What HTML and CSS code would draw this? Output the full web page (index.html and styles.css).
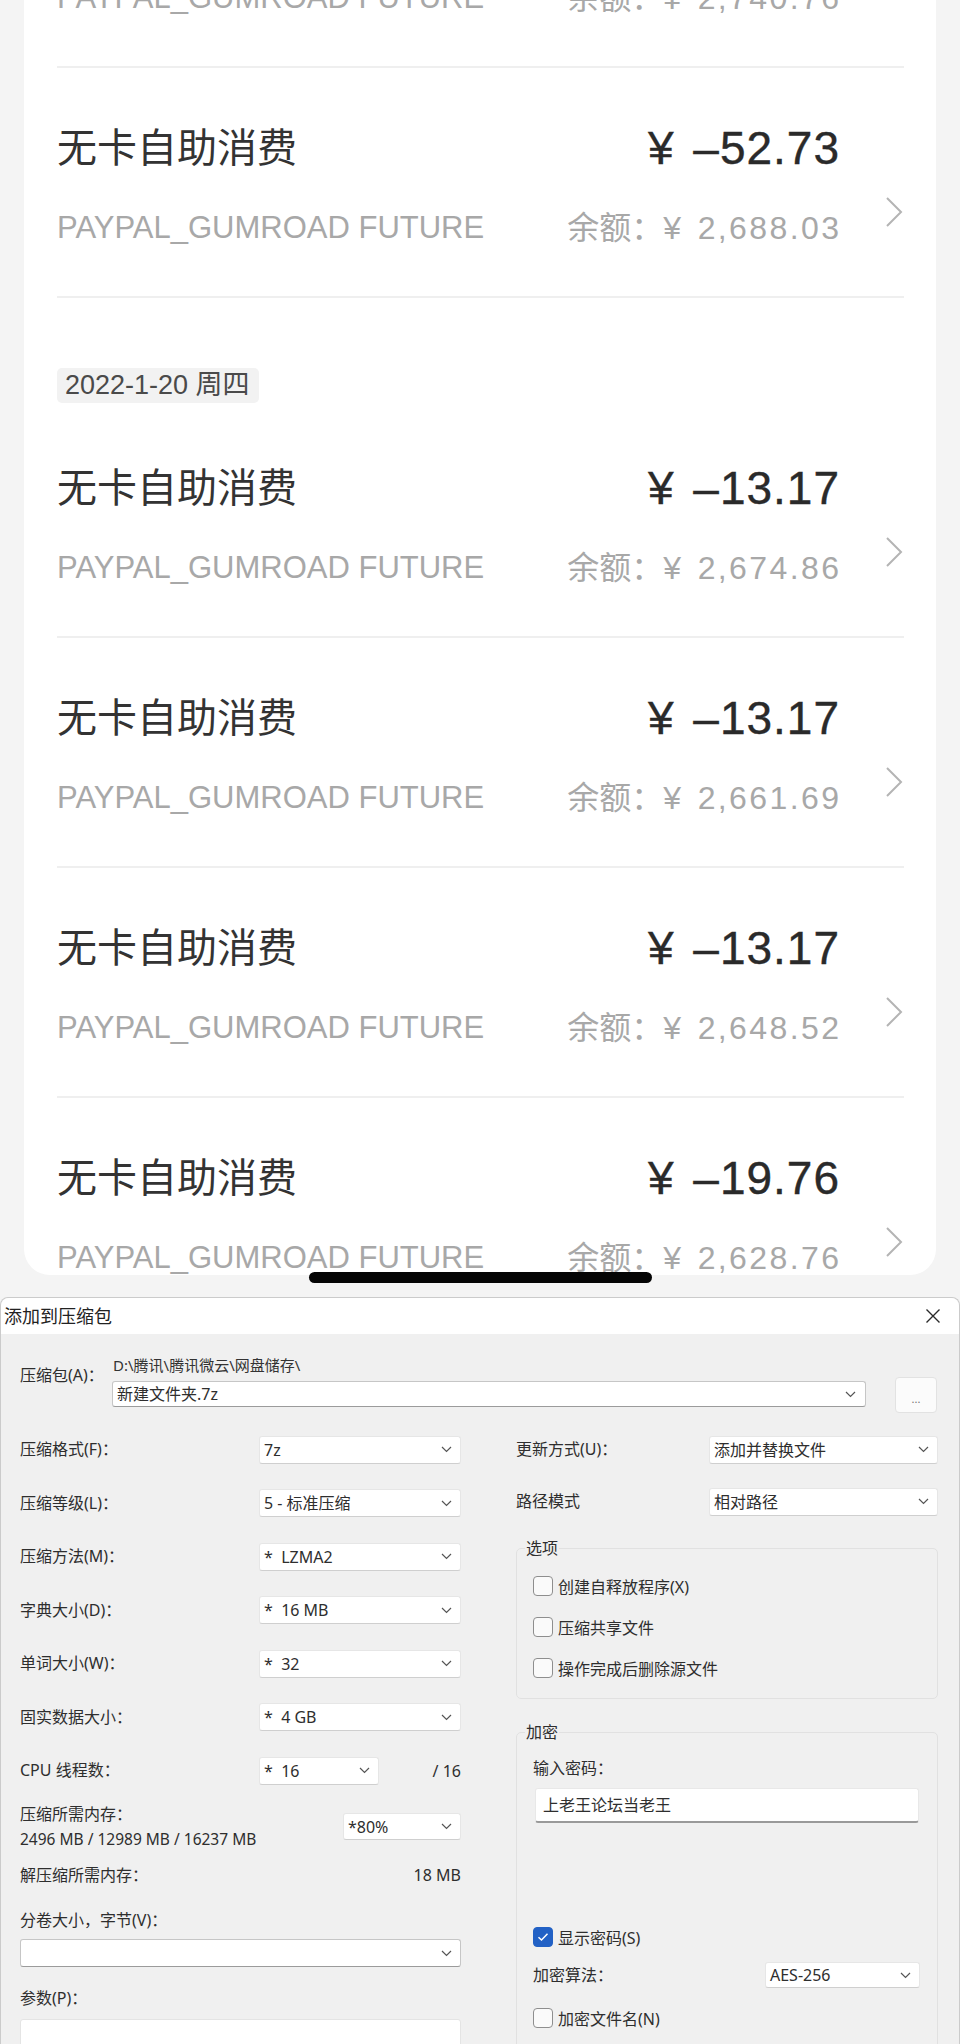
FILE: index.html
```html
<!DOCTYPE html>
<html lang="zh-CN">
<head>
<meta charset="utf-8">
<title>交易明细</title>
<link rel="stylesheet" href="styles.css">
</head>
<body>
<div class="phone">
  <div class="card">
    <div class="row first">
      <div class="row-main">
        <div class="line"><span class="title">无卡自助消费</span><span class="amount">¥ –20.03</span></div>
        <div class="line sub"><span class="merchant">PAYPAL_GUMROAD FUTURE</span><span class="balance">余额：<span class="num">¥ 2,740.76</span></span></div>
      </div>
      <div class="chev-col"><svg class="chev" width="18" height="32" viewBox="0 0 18 32"><path d="M2 2L16 16L2 30" fill="none" stroke="#b4b4b4" stroke-width="2"/></svg></div>
    </div>
    <div class="row">
      <div class="row-main">
        <div class="line"><span class="title">无卡自助消费</span><span class="amount">¥ –52.73</span></div>
        <div class="line sub"><span class="merchant">PAYPAL_GUMROAD FUTURE</span><span class="balance">余额：<span class="num">¥ 2,688.03</span></span></div>
      </div>
      <div class="chev-col"><svg class="chev" width="18" height="32" viewBox="0 0 18 32"><path d="M2 2L16 16L2 30" fill="none" stroke="#b4b4b4" stroke-width="2"/></svg></div>
    </div>
    <div class="date-group"><span class="date">2022-1-20 周四</span></div>
    <div class="row">
      <div class="row-main">
        <div class="line"><span class="title">无卡自助消费</span><span class="amount">¥ –13.17</span></div>
        <div class="line sub"><span class="merchant">PAYPAL_GUMROAD FUTURE</span><span class="balance">余额：<span class="num">¥ 2,674.86</span></span></div>
      </div>
      <div class="chev-col"><svg class="chev" width="18" height="32" viewBox="0 0 18 32"><path d="M2 2L16 16L2 30" fill="none" stroke="#b4b4b4" stroke-width="2"/></svg></div>
    </div>
    <div class="row">
      <div class="row-main">
        <div class="line"><span class="title">无卡自助消费</span><span class="amount">¥ –13.17</span></div>
        <div class="line sub"><span class="merchant">PAYPAL_GUMROAD FUTURE</span><span class="balance">余额：<span class="num">¥ 2,661.69</span></span></div>
      </div>
      <div class="chev-col"><svg class="chev" width="18" height="32" viewBox="0 0 18 32"><path d="M2 2L16 16L2 30" fill="none" stroke="#b4b4b4" stroke-width="2"/></svg></div>
    </div>
    <div class="row">
      <div class="row-main">
        <div class="line"><span class="title">无卡自助消费</span><span class="amount">¥ –13.17</span></div>
        <div class="line sub"><span class="merchant">PAYPAL_GUMROAD FUTURE</span><span class="balance">余额：<span class="num">¥ 2,648.52</span></span></div>
      </div>
      <div class="chev-col"><svg class="chev" width="18" height="32" viewBox="0 0 18 32"><path d="M2 2L16 16L2 30" fill="none" stroke="#b4b4b4" stroke-width="2"/></svg></div>
    </div>
    <div class="row">
      <div class="row-main">
        <div class="line"><span class="title">无卡自助消费</span><span class="amount">¥ –19.76</span></div>
        <div class="line sub"><span class="merchant">PAYPAL_GUMROAD FUTURE</span><span class="balance">余额：<span class="num">¥ 2,628.76</span></span></div>
      </div>
      <div class="chev-col"><svg class="chev" width="18" height="32" viewBox="0 0 18 32"><path d="M2 2L16 16L2 30" fill="none" stroke="#b4b4b4" stroke-width="2"/></svg></div>
    </div>
  </div>
  <div class="home-bar"></div>

  <div class="dialog">
    <div class="titlebar">
      <span class="dlg-title">添加到压缩包</span>
      <svg class="close" width="16" height="16" viewBox="0 0 16 16"><path d="M1.5 1.5L14.5 14.5M14.5 1.5L1.5 14.5" stroke="#2a2a2a" stroke-width="1.4" fill="none"/></svg>
    </div>
    <div class="dlg-body">
      <div class="archive">
        <span class="archive-lbl">压缩包(A)：</span>
        <div class="archive-main">
          <div class="path">D:\腾讯\腾讯微云\网盘储存\</div>
          <div class="select edit wide"><span>新建文件夹.7z</span><svg width="11" height="7" viewBox="0 0 11 7"><path d="M1 1L5.5 5.5L10 1" fill="none" stroke="#555" stroke-width="1.2"/></svg></div>
        </div>
        <div class="browse">...</div>
      </div>

      <div class="cols">
        <div class="col-left">
          <div class="frow"><span class="lbl">压缩格式(F)：</span><div class="select sel-l"><span>7z</span><svg width="11" height="7" viewBox="0 0 11 7"><path d="M1 1L5.5 5.5L10 1" fill="none" stroke="#555" stroke-width="1.2"/></svg></div></div>
          <div class="frow"><span class="lbl">压缩等级(L)：</span><div class="select sel-l"><span>5 - 标准压缩</span><svg width="11" height="7" viewBox="0 0 11 7"><path d="M1 1L5.5 5.5L10 1" fill="none" stroke="#555" stroke-width="1.2"/></svg></div></div>
          <div class="frow"><span class="lbl">压缩方法(M)：</span><div class="select sel-l"><span>*&nbsp;&nbsp;LZMA2</span><svg width="11" height="7" viewBox="0 0 11 7"><path d="M1 1L5.5 5.5L10 1" fill="none" stroke="#555" stroke-width="1.2"/></svg></div></div>
          <div class="frow"><span class="lbl">字典大小(D)：</span><div class="select sel-l"><span>*&nbsp;&nbsp;16 MB</span><svg width="11" height="7" viewBox="0 0 11 7"><path d="M1 1L5.5 5.5L10 1" fill="none" stroke="#555" stroke-width="1.2"/></svg></div></div>
          <div class="frow"><span class="lbl">单词大小(W)：</span><div class="select sel-l"><span>*&nbsp;&nbsp;32</span><svg width="11" height="7" viewBox="0 0 11 7"><path d="M1 1L5.5 5.5L10 1" fill="none" stroke="#555" stroke-width="1.2"/></svg></div></div>
          <div class="frow"><span class="lbl">固实数据大小：</span><div class="select sel-l"><span>*&nbsp;&nbsp;4 GB</span><svg width="11" height="7" viewBox="0 0 11 7"><path d="M1 1L5.5 5.5L10 1" fill="none" stroke="#555" stroke-width="1.2"/></svg></div></div>
          <div class="frow"><span class="lbl">CPU 线程数：</span><div class="select sel-cpu"><span>*&nbsp;&nbsp;16</span><svg width="11" height="7" viewBox="0 0 11 7"><path d="M1 1L5.5 5.5L10 1" fill="none" stroke="#555" stroke-width="1.2"/></svg></div><span class="frac">/ 16</span></div>
          <div class="mem">
            <div class="mem-text"><div>压缩所需内存：</div><div>2496 MB / 12989 MB / 16237 MB</div></div>
            <div class="select sel-mem"><span>*80%</span><svg width="11" height="7" viewBox="0 0 11 7"><path d="M1 1L5.5 5.5L10 1" fill="none" stroke="#555" stroke-width="1.2"/></svg></div>
          </div>
          <div class="plain"><span>解压缩所需内存：</span><span>18 MB</span></div>
          <div class="plain-lbl">分卷大小，字节(V)：</div>
          <div class="select edit vol"><span></span><svg width="11" height="7" viewBox="0 0 11 7"><path d="M1 1L5.5 5.5L10 1" fill="none" stroke="#555" stroke-width="1.2"/></svg></div>
          <div class="plain-lbl params-lbl">参数(P)：</div>
          <div class="params"></div>
        </div>

        <div class="col-right">
          <div class="frow"><span class="lbl-r">更新方式(U)：</span><div class="select sel-r"><span>添加并替换文件</span><svg width="11" height="7" viewBox="0 0 11 7"><path d="M1 1L5.5 5.5L10 1" fill="none" stroke="#555" stroke-width="1.2"/></svg></div></div>
          <div class="frow short"><span class="lbl-r">路径模式</span><div class="select sel-r"><span>相对路径</span><svg width="11" height="7" viewBox="0 0 11 7"><path d="M1 1L5.5 5.5L10 1" fill="none" stroke="#555" stroke-width="1.2"/></svg></div></div>

          <fieldset class="group opts">
            <legend>选项</legend>
            <div class="cbrow"><span class="cb"></span><span>创建自释放程序(X)</span></div>
            <div class="cbrow"><span class="cb"></span><span>压缩共享文件</span></div>
            <div class="cbrow"><span class="cb"></span><span>操作完成后删除源文件</span></div>
          </fieldset>

          <fieldset class="group enc">
            <legend>加密</legend>
            <div class="plain-lbl">输入密码：</div>
            <div class="pwd">上老王论坛当老王</div>
            <div class="cbrow show-pwd"><span class="cb checked"><svg width="12" height="10" viewBox="0 0 12 10"><path d="M1.5 5.2L4.5 8L10.5 1.8" stroke="#fff" stroke-width="1.5" fill="none"/></svg></span><span>显示密码(S)</span></div>
            <div class="algo"><span>加密算法：</span><div class="select sel-aes"><span>AES-256</span><svg width="11" height="7" viewBox="0 0 11 7"><path d="M1 1L5.5 5.5L10 1" fill="none" stroke="#555" stroke-width="1.2"/></svg></div></div>
            <div class="cbrow encname"><span class="cb"></span><span>加密文件名(N)</span></div>
          </fieldset>
        </div>
      </div>
    </div>
  </div>
</div>
</body>
</html>
```

FILE: styles.css
```css
* { box-sizing: border-box; }
html, body { margin: 0; padding: 0; }
body {
  width: 960px;
  height: 2044px;
  overflow: hidden;
  background: #f4f4f4;
  font-family: "Liberation Sans", "Noto Sans CJK SC", sans-serif;
}
.phone { position: relative; }

/* ---------- transaction card ---------- */
.card {
  margin: 0 24px;
  height: 1275px;
  background: #ffffff;
  border-radius: 0 0 26px 26px;
  overflow: hidden;
  padding: 0 32px 0 33px;
}
.row {
  display: flex;
  padding: 52px 0 46px;
  border-bottom: 2px solid #efefef;
}
.row.first { margin-top: -162px; }
.row-main { flex: 1; min-width: 0; }
.line {
  display: flex;
  justify-content: space-between;
  height: 56px;
  white-space: nowrap;
}
.line.sub { height: 44px; margin-top: 30px; }
.title {
  font-size: 40px;
  line-height: 56px;
  color: #333333;
}
.amount {
  font-size: 46px;
  line-height: 56px;
  color: #2a2a2a;
  letter-spacing: 1px;
  word-spacing: 5px;
  margin-right: -1px;
  -webkit-text-stroke: 0.4px #2a2a2a;
}
.merchant {
  font-size: 31px;
  line-height: 44px;
  color: #a8a8a8;
}
.balance {
  flex: 0 0 auto;
  font-size: 32px;
  line-height: 44px;
  color: #a8a8a8;
  white-space: nowrap;
}
.balance .num { letter-spacing: 2.4px; word-spacing: 3px; margin-right: -2.4px; }
.chev-col {
  width: 65px;
  flex: 0 0 65px;
  display: flex;
  justify-content: flex-end;
  align-items: flex-start;
}
.chev { display: block; margin-top: 76px; margin-right: 1px; }

.date-group {
  padding-top: 70px;
  height: 110px;
}
.date {
  display: inline-block;
  height: 35px;
  line-height: 35px;
  padding: 0 9px 0 8px;
  background: #f2f2f2;
  border-radius: 5px;
  font-size: 27px;
  color: #4a4a4a;
}

.home-bar {
  position: absolute;
  left: 309px;
  top: 1272px;
  width: 343px;
  height: 11px;
  border-radius: 6px;
  background: #050505;
}

/* ---------- dialog ---------- */
.dialog {
  margin-top: 22px;
  border: 1px solid #cbcbcb;
  border-bottom: none;
  border-radius: 8px 8px 0 0;
  background: #f0f0f0;
  font-family: "Noto Sans", "Noto Sans CJK SC", sans-serif;
  font-size: 16px;
  color: #2e2e2e;
}
.titlebar {
  height: 36px;
  background: #ffffff;
  border-radius: 8px 8px 0 0;
  display: flex;
  align-items: center;
  justify-content: space-between;
  padding: 0 18px 0 3px;
}
.dlg-title { font-size: 18px; line-height: 24px; color: #222; }
.close { display: block; }

.dlg-body { padding: 21px 21px 0 19px; }

.archive { display: flex; align-items: flex-start; }
.archive-lbl { width: 92px; flex: 0 0 92px; margin-top: 10px; line-height: 20px; }
.archive-main { width: 754px; flex: 0 0 754px; }
.path { font-size: 15px; line-height: 20px; padding-left: 1px; color: #333; }
.browse {
  flex: 0 0 42px;
  width: 42px;
  height: 36px;
  margin: 22px 0 0 29px;
  background: #fbfbfb;
  border: 1px solid #e2e2e2;
  border-radius: 4px;
  font-size: 11px;
  color: #777;
  display: flex;
  align-items: center;
  justify-content: center;
  padding-top: 6px;
}

.select {
  height: 28px;
  background: #ffffff;
  border: 1px solid #e6e6e6;
  border-bottom-color: #cfcfcf;
  border-radius: 3px;
  display: flex;
  align-items: center;
  justify-content: space-between;
  padding: 0 8px 0 4px;
  line-height: 26px;
  white-space: nowrap;
}
.select svg { display: block; flex: 0 0 auto; }
.select.edit { border-color: #c6c6c6; border-bottom-color: #9b9b9b; }
.select.wide { height: 26px; margin-top: 6px; padding-right: 9px; }

.cols { display: flex; gap: 55px; margin-top: 10px; }
.col-left { width: 441px; flex: 0 0 441px; }
.col-right { width: 422px; flex: 0 0 422px; }

.frow { display: flex; align-items: center; height: 53.5px; }
.frow.short { height: 50px; }
.lbl { flex: 0 0 239px; line-height: 25px; }
.sel-l { width: 202px; }
.sel-cpu { width: 120px; }
.frac { margin-left: auto; }
.mem {
  display: flex;
  align-items: center;
  justify-content: space-between;
  padding: 4px 0 11px;
}
.mem-text { line-height: 25px; font-size: 15.5px; }
.mem-text div:first-child { font-size: 16px; }
.sel-mem { width: 118px; height: 27px; }
.plain {
  display: flex;
  justify-content: space-between;
  line-height: 25px;
  height: 25px;
  margin-bottom: 20px;
}
.plain-lbl { line-height: 25px; }
.select.vol { margin-top: 6.5px; width: 441px; }
.params-lbl { margin-top: 18.5px; }
.params {
  margin-top: 8.5px;
  height: 80px;
  background: #ffffff;
  border: 1px solid #e4e4e4;
  border-radius: 3px;
}

.lbl-r { flex: 0 0 193px; line-height: 25px; }
.sel-r { width: 229px; }

.group {
  margin: 10.5px 0 0;
  border: 1px solid #e1e1e1;
  border-radius: 5px;
  padding: 6.5px 16px 9.5px;
  min-width: 0;
}
.group legend {
  padding: 0 1px;
  margin-left: -8px;
  line-height: 22px;
  font-size: 16px;
}
.group.enc { margin-top: 22px; padding: 12.5px 16px 80px; }
.cbrow { display: flex; align-items: center; height: 41px; }
.cb {
  flex: 0 0 20px;
  width: 20px;
  height: 20px;
  border: 1px solid #8e8e8e;
  border-radius: 4px;
  background: #fafafa;
  margin-right: 5px;
  display: flex;
  align-items: center;
  justify-content: center;
}
.cb.checked { background: #2261c5; border-color: #2261c5; }
.cb svg { display: block; }
.pwd {
  margin: 7.5px 0 0 2px;
  width: 384px;
  height: 35px;
  background: #ffffff;
  border: 1px solid #e8e8e8;
  border-bottom: 2px solid #9a9a9a;
  border-radius: 3px;
  padding: 0 7px;
  line-height: 32px;
}
.show-pwd { margin-top: 93.5px; }
.algo {
  display: flex;
  align-items: center;
  justify-content: space-between;
  height: 35px;
  line-height: 25px;
}
.sel-aes { width: 155px; height: 26px; margin-right: 1px; }
.encname { margin-top: 5px; }
```
